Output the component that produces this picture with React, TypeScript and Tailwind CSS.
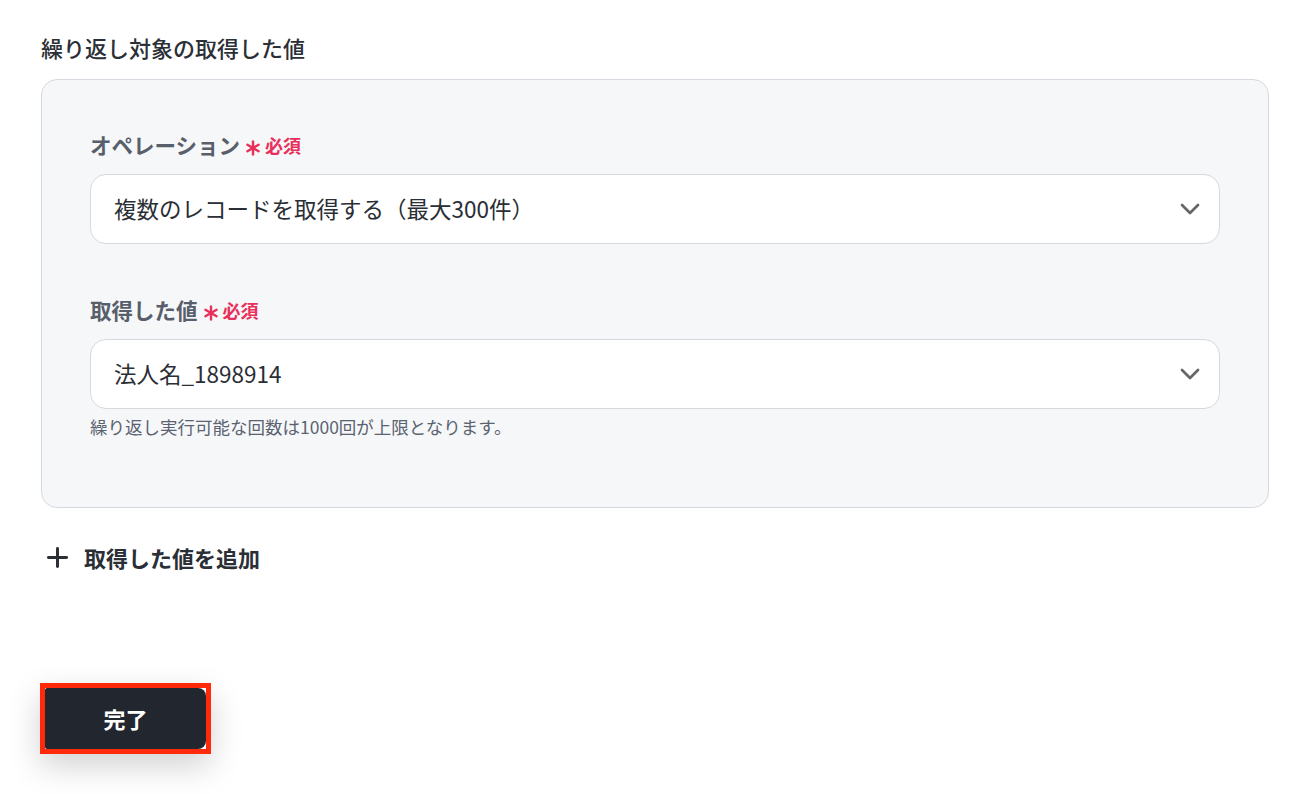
import { ChevronDown, Plus } from 'lucide-react';

const font = {
  fontFamily: '"Noto Sans CJK JP", "Noto Sans", sans-serif',
};

function Asterisk() {
  return (
    <svg width="16" height="16" viewBox="0 0 16 16" className="mt-[5px]">
      <g stroke="#e8305a" strokeWidth="2.4" strokeLinecap="round">
        <line x1="8" y1="1.5" x2="8" y2="14.5" />
        <line x1="2.4" y1="4.75" x2="13.6" y2="11.25" />
        <line x1="2.4" y1="11.25" x2="13.6" y2="4.75" />
      </g>
    </svg>
  );
}

interface FieldProps {
  label: string;
  value: string;
  hint?: string;
}

function SelectField({ label, value, hint }: FieldProps) {
  return (
    <div>
      <div className="flex items-center h-[30px]">
        <span className="text-[21.5px] font-bold text-[#585f6b] leading-[30px]">{label}</span>
        <span className="ml-[5px] mr-[4px] flex items-center">
          <Asterisk />
        </span>
        <span className="text-[18px] font-bold text-[#e8305a] leading-[30px]">必須</span>
      </div>
      <div className="mt-[14px] h-[70px] bg-white border border-[#d6d9df] rounded-[16px] flex items-center justify-between pl-[23px] pr-[13px]">
        <span className="text-[22.5px] text-[#2a2e35]">{value}</span>
        <ChevronDown className="w-[32px] h-[32px] text-[#666666]" strokeWidth={2} />
      </div>
      {hint && <p className="mt-[6px] text-[17.5px] leading-[24px] text-[#5b6370]">{hint}</p>}
    </div>
  );
}

export default function App() {
  return (
    <div className="min-h-[794px] bg-white px-[41px] pt-[32px]" style={font}>
      <h2 className="text-[22px] font-medium text-[#2b2f36] leading-[30px]">繰り返し対象の取得した値</h2>
      <div className="mt-[17px] w-[1228px] bg-[#f6f7f9] border border-[#d6d9df] rounded-[16px] px-[48px] pt-[50px] pb-[68px]">
        <SelectField label="オペレーション" value="複数のレコードを取得する（最大300件）" />
        <div className="h-[51px]" />
        <SelectField
          label="取得した値"
          value="法人名_1898914"
          hint="繰り返し実行可能な回数は1000回が上限となります。"
        />
      </div>
      <button className="mt-[34px] ml-[1px] flex items-center gap-[11px] h-[30px] text-[22px] font-bold text-[#2a2e35]">
        <Plus className="w-[31px] h-[31px]" strokeWidth={2.3} />
        取得した値を追加
      </button>
      <div className="mt-[111px] ml-[-1px] w-[171px] h-[71px] border-[5px] border-[#ff2a0a] shadow-[0_12px_32px_rgba(0,0,0,0.18)]">
        <button className="w-full h-full bg-[#22262e] rounded-r-[8px] rounded-l-[2px] text-white text-[22px] font-bold">
          完了
        </button>
      </div>
    </div>
  );
}
